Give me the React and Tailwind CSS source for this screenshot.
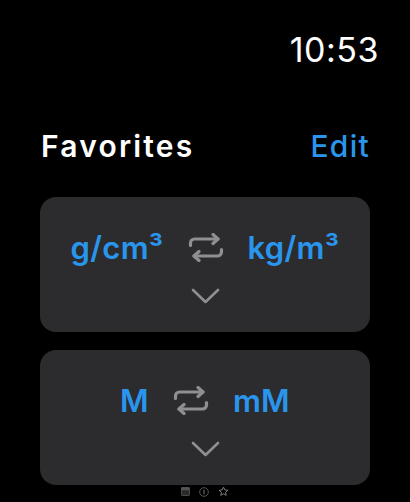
import React from "react";

const font = { fontFamily: "Inter, 'Liberation Sans', sans-serif" };

function SwapIcon({ className }) {
  return (
    <svg viewBox="0 0 36 29" className={className} fill="none" stroke="#8e8e93" strokeWidth="3.2" strokeLinecap="round" strokeLinejoin="round">
      <path d="M2.5 12.5 V10 a4 4 0 0 1 4 -4 H30" />
      <path d="M25 1.5 L30 6 L25 10.5" />
      <path d="M33.5 16.5 V19 a4 4 0 0 1 -4 4 H6" />
      <path d="M11 18.5 L6 23 L11 27.5" />
    </svg>
  );
}

function Chevron() {
  return (
    <svg viewBox="0 0 29 16" className="w-[29px] h-[16px]" fill="none" stroke="#8e8e93" strokeWidth="2.6" strokeLinecap="round" strokeLinejoin="round">
      <path d="M2 2 L14.5 14 L27 2" />
    </svg>
  );
}

function Card({ left, right }) {
  return (
    <div className="h-[135px] rounded-[16px] bg-[#2c2c2e] flex flex-col items-center pt-[35px]">
      <div className="flex items-center gap-[24px]">
        <span className="text-[31px] font-semibold text-[#2a95ec] leading-none tracking-[0.3px]">{left}</span>
        <SwapIcon className="w-[36px] h-[29px]" />
        <span className="text-[31px] font-semibold text-[#2a95ec] leading-none tracking-[0.3px]">{right}</span>
      </div>
      <div className="mt-[25px]">
        <Chevron />
      </div>
    </div>
  );
}

export default function App() {
  return (
    <div className="w-[410px] h-[502px] bg-black text-white flex flex-col relative overflow-hidden" style={font}>
      <div className="flex justify-end pr-[31px] pt-[33px]">
        <span className="text-[34px] leading-none font-normal tracking-[0.5px]">10:53</span>
      </div>
      <div className="flex justify-between items-baseline pl-[41px] pr-[40px] mt-[64px]">
        <span className="text-[30px] font-semibold leading-none tracking-[2.2px]">Favorites</span>
        <span className="text-[30px] font-medium leading-none tracking-[1.3px] text-[#2a95ec]">Edit</span>
      </div>
      <div className="flex flex-col gap-[18px] px-[40px] mt-[36px]">
        <Card left={<>g/cm³</>} right={<>kg/m³</>} />
        <Card left="M" right="mM" />
      </div>
      <div className="absolute bottom-[5px] left-0 right-0 flex justify-center items-center gap-[9px]">
        <svg viewBox="0 0 10 10" className="w-[9px] h-[9px]">
          <rect x="0.5" y="0.5" width="9" height="9" rx="1" fill="#2a2a2a" stroke="#555" />
          <rect x="0.5" y="0.5" width="9" height="3" fill="#555" />
        </svg>
        <svg viewBox="0 0 10 10" className="w-[10px] h-[10px]">
          <circle cx="5" cy="5" r="4.3" fill="none" stroke="#555" strokeWidth="1" />
          <rect x="4.3" y="2.5" width="1.4" height="5" rx="0.7" fill="#555" />
        </svg>
        <svg viewBox="0 0 24 24" className="w-[11px] h-[11px]" fill="none" stroke="#888" strokeWidth="2" strokeLinejoin="round">
          <path d="M12 2.5 L14.9 8.6 L21.5 9.3 L16.6 13.8 L18 20.4 L12 17 L6 20.4 L7.4 13.8 L2.5 9.3 L9.1 8.6 Z" />
        </svg>
      </div>
    </div>
  );
}
